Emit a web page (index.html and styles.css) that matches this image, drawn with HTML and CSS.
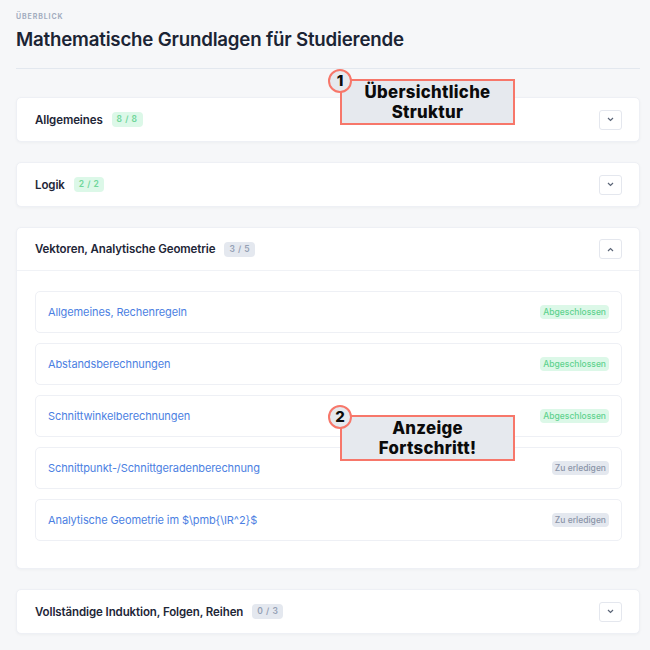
FILE: index.html
```html
<!DOCTYPE html>
<html lang="de">
<head>
<meta charset="utf-8">
<link rel="stylesheet" href="styles.css">
</head>
<body>
<div class="page">
  <header class="head">
    <div class="eyebrow">ÜBERBLICK</div>
    <h1 class="title">Mathematische Grundlagen für Studierende</h1>
  </header>

  <section class="card">
    <div class="card-head">
      <span class="card-title">Allgemeines</span>
      <span class="count done">8 / 8</span>
      <button class="toggle"><svg width="7" height="5" viewBox="0 0 7 5"><path d="M1 1l2.5 2.5L6 1" fill="none" stroke="#5b6577" stroke-width="1.2"/></svg></button>
    </div>
  </section>

  <section class="card">
    <div class="card-head">
      <span class="card-title">Logik</span>
      <span class="count done">2 / 2</span>
      <button class="toggle"><svg width="7" height="5" viewBox="0 0 7 5"><path d="M1 1l2.5 2.5L6 1" fill="none" stroke="#5b6577" stroke-width="1.2"/></svg></button>
    </div>
  </section>

  <section class="card">
    <div class="card-head open">
      <span class="card-title">Vektoren, Analytische Geometrie</span>
      <span class="count todo">3 / 5</span>
      <button class="toggle"><svg width="7" height="5" viewBox="0 0 7 5"><path d="M1 4l2.5-2.5L6 4" fill="none" stroke="#5b6577" stroke-width="1.2"/></svg></button>
    </div>
    <div class="card-body">
      <div class="item"><span class="item-link">Allgemeines, Rechenregeln</span><span class="status ok">Abgeschlossen</span></div>
      <div class="item"><span class="item-link">Abstandsberechnungen</span><span class="status ok">Abgeschlossen</span></div>
      <div class="item"><span class="item-link">Schnittwinkelberechnungen</span><span class="status ok">Abgeschlossen</span></div>
      <div class="item"><span class="item-link">Schnittpunkt-/Schnittgeradenberechnung</span><span class="status open">Zu erledigen</span></div>
      <div class="item"><span class="item-link">Analytische Geometrie im $\pmb{\IR^2}$</span><span class="status open">Zu erledigen</span></div>
    </div>
  </section>

  <section class="card">
    <div class="card-head">
      <span class="card-title">Vollständige Induktion, Folgen, Reihen</span>
      <span class="count todo">0 / 3</span>
      <button class="toggle"><svg width="7" height="5" viewBox="0 0 7 5"><path d="M1 1l2.5 2.5L6 1" fill="none" stroke="#5b6577" stroke-width="1.2"/></svg></button>
    </div>
  </section>

  <div class="note note-1"><span class="num">1</span>Übersichtliche<br>Struktur</div>
  <div class="note note-2"><span class="num">2</span>Anzeige<br>Fortschritt!</div>
</div>
</body>
</html>
```

FILE: styles.css
```css
* { box-sizing: border-box; }
html, body { margin: 0; padding: 0; }
body {
  background: #f6f7f9;
  font-family: "Inter", "Lato", sans-serif;
  width: 650px;
  height: 650px;
  overflow: hidden;
}
.page {
  position: relative;
  padding: 0 10px 0 16px;
  display: flex;
  flex-direction: column;
  gap: 20px;
}
.head {
  padding-top: 12px;
  padding-bottom: 16px;
  border-bottom: 1px solid #e3e8ef;
  margin-bottom: 8px;
}
.eyebrow {
  font-size: 7px;
  font-weight: 700;
  letter-spacing: 0.9px;
  color: #a3adbf;
  line-height: 10px;
}
.title {
  margin: 6px 0 0;
  font-size: 18.7px;
  font-weight: 600;
  color: #1b2434;
  line-height: 24px;
  letter-spacing: -0.2px;
}
.card {
  background: #fff;
  border: 1px solid #eef0f5;
  border-radius: 5px;
  box-shadow: 0 1px 3px rgba(30, 40, 60, 0.04);
}
.card-head {
  height: 43px;
  display: flex;
  align-items: center;
  padding: 0 17px 0 18px;
}
.card-head.open {
  border-bottom: 1px solid #f0f2f6;
}
.card-title {
  font-size: 11.5px;
  font-weight: 600;
  color: #1e2637;
  letter-spacing: -0.1px;
}
.count {
  margin-left: 9px;
  font-size: 8.5px;
  font-weight: 600;
  letter-spacing: 0.5px;
  padding: 0 5px;
  height: 15px;
  line-height: 15px;
  border-radius: 4px;
}
.count.done { background: #dcf8e8; color: #6fd69a; }
.count.todo { background: #e4e8ef; color: #94a0b4; }
.toggle {
  margin-left: auto;
  width: 23px;
  height: 20px;
  border: 1px solid #e4e7ee;
  border-radius: 3px;
  background: #fff;
  display: flex;
  align-items: center;
  justify-content: center;
  padding: 0;
}
.card-body {
  padding: 20px 17px 27px 18px;
  display: flex;
  flex-direction: column;
  gap: 10px;
}
.item {
  height: 42px;
  border: 1px solid #eef0f5;
  border-radius: 5px;
  display: flex;
  align-items: center;
  justify-content: space-between;
  padding: 0 12px 0 12px;
}
.item-link {
  font-size: 11px;
  color: #4c7fe2;
  letter-spacing: -0.1px;
}
.status {
  font-size: 8.5px;
  font-weight: 500;
  height: 14px;
  line-height: 14px;
  padding: 0 3px;
  border-radius: 4px;
}
.status.ok { background: #dcf8e8; color: #5fd28e; }
.status.open { background: #e4e8ef; color: #8a94a8; }
.note {
  position: absolute;
  left: 340px;
  width: 175px;
  height: 46px;
  background: #e6e9ee;
  border: 2px solid #f7776a;
  font-family: "Inter", sans-serif;
  font-weight: 800;
  font-size: 16.8px;
  letter-spacing: 0.3px;
  line-height: 20px;
  color: #0b0b0b;
  text-align: center;
  padding-top: 1px;
}
.note-1 { top: 79px; }
.note-2 { top: 415px; }
.num {
  position: absolute;
  left: -14px;
  top: -12px;
  width: 24px;
  height: 24px;
  border-radius: 50%;
  border: 2px solid #f7776a;
  background: #e6e9ee;
  font-size: 15px;
  line-height: 20px;
  text-align: center;
  letter-spacing: 0;
}
```
